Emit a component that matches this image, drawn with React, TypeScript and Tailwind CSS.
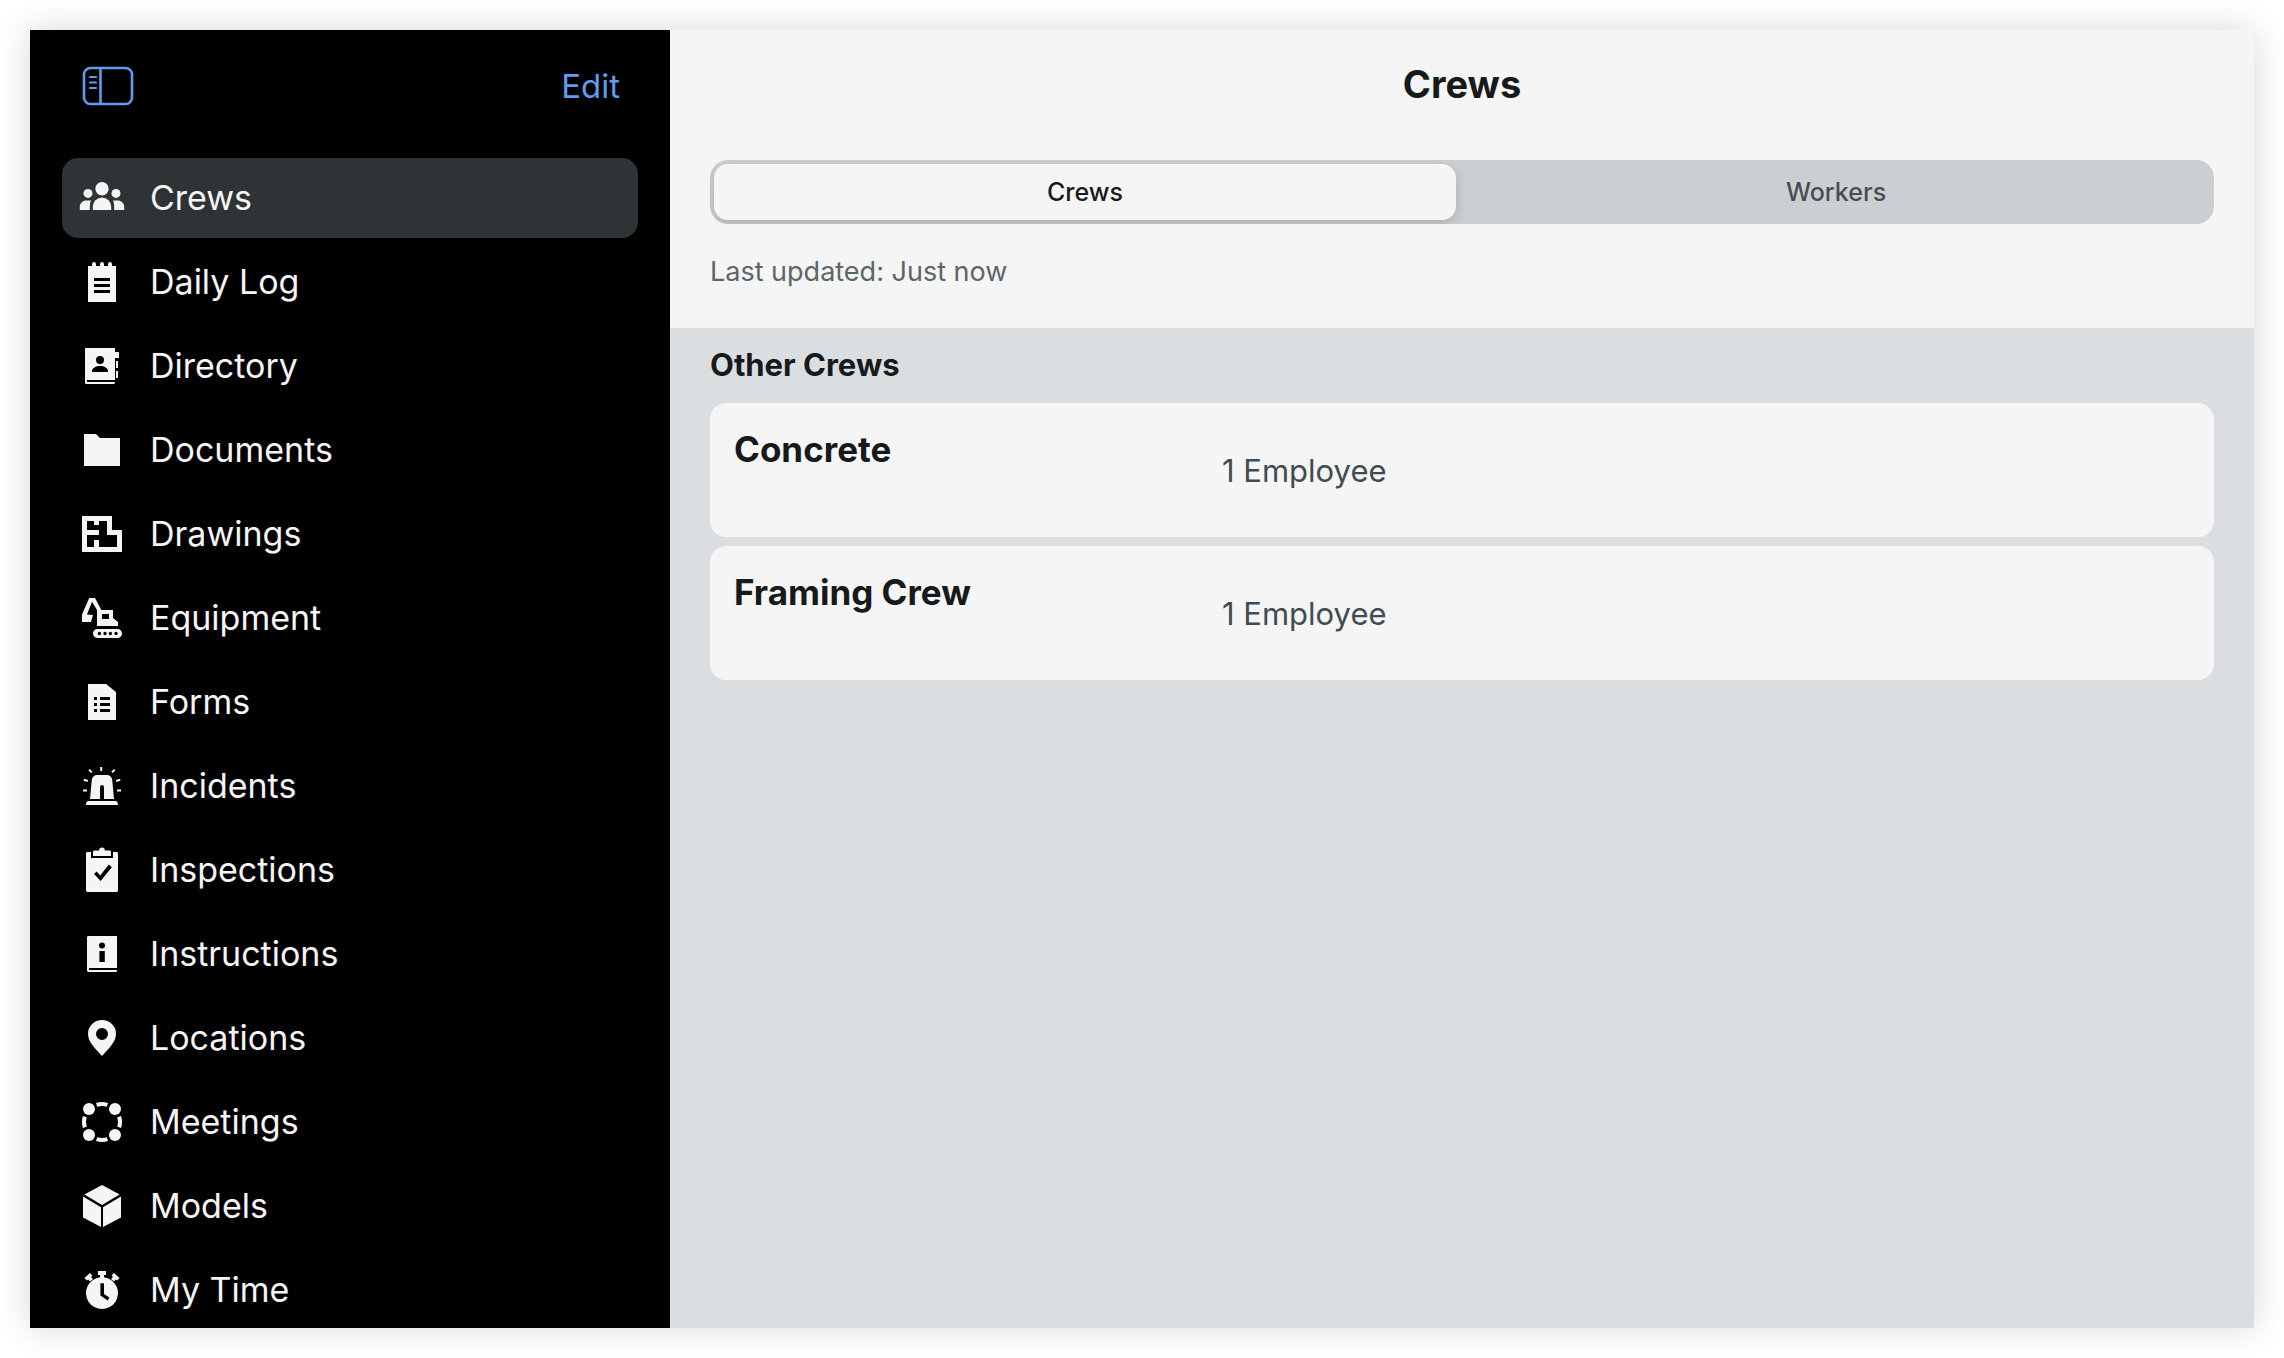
import { useState, type ReactNode } from "react";

const icons: Record<string, ReactNode> = {
  Crews: (
    <>
      <circle cx="12" cy="7.35" r="3.35" />
      <circle cx="5" cy="9.7" r="2.25" />
      <circle cx="19" cy="9.7" r="2.25" />
      <path d="M7.4 18v-1.6a4.6 4.6 0 0 1 9.2 0V18z" />
      <path d="M.9 18v-1.6c0-1.9 1.5-3.2 3.4-3.2h2.2c-.4.9-.6 1.9-.6 3V18z" />
      <path d="M23.1 18v-1.6c0-1.9-1.5-3.2-3.4-3.2h-2.2c.4.9.6 1.9.6 3V18z" />
    </>
  ),
  "Daily Log": (
    <path
      fillRule="evenodd"
      d="M5 4h2V3a1 1 0 0 1 2 0v1h2V3a1 1 0 0 1 2 0v1h2V3a1 1 0 0 1 2 0v1h2v18H5zM8 10v1.5h8V10zM8 13v1.5h8V13zM8 16v1.5h8V16z"
    />
  ),
  Directory: (
    <>
      <path
        fillRule="evenodd"
        d="M4 3h14.5v2h2v3h-2v11h-14v1h14v.3c0 .4-.3.7-.7.7H4a.5.5 0 0 1-.5-.5v-17A.5.5 0 0 1 4 3zM11 7a2 2 0 1 0 0 4 2 2 0 0 0 0-4zM7 15h8v-.5c0-1.5-2-2.5-4-2.5s-4 1-4 2.5z"
      />
      <path d="M19 9.5h1V13h-1zM19 14.500h1V18h-1z" />
    </>
  ),
  Documents: <path d="M3 4h6l2 2h10v14H3z" />,
  Drawings: (
    <path
      fillRule="evenodd"
      d="M2 3h15v7h5v11H2zM4.5 5.5V10h6v2.5h-6v6H8V15h2.5v3.5h9v-6h-5v-7h-4v2H8v-2z"
    />
  ),
  Equipment: (
    <>
      <path
        fillRule="evenodd"
        d="M5.6 2h2.9l3.2 6h5.8v4l2.5 2v2H9.5V8L7 3.9 4.5 10.3l3 .2-1 3.5H2v-3.7zM12 10v2.5h3.5V10z"
      />
      <path
        fillRule="evenodd"
        d="M9.75 17.5h10a2.25 2.25 0 0 1 0 4.5h-10a2.25 2.25 0 0 1 0-4.5zM10.7 18.9a.85.85 0 1 0 0 1.7.85.85 0 0 0 0-1.7zM13.5 18.9a.85.85 0 1 0 0 1.7.85.85 0 0 0 0-1.7zM16.2 18.9a.85.85 0 1 0 0 1.7.85.85 0 0 0 0-1.7zM19 18.9a.85.85 0 1 0 0 1.7.85.85 0 0 0 0-1.7z"
      />
    </>
  ),
  Forms: (
    <path
      fillRule="evenodd"
      d="M5 3h9l5 4v14H5zM8 9.5V11h1.5V9.5zM11 9.5V11h5V9.5zM8 12.5V14h1.5v-1.5zM11 12.5V14h5v-1.5zM8 15.5V17h1.5v-1.5zM11 15.5V17h5v-1.5z"
    />
  ),
  Incidents: (
    <>
      <path d="M6 18.5 6.9 8.9A2.6 2.6 0 0 1 9.5 6.5h5a2.6 2.6 0 0 1 2.6 2.4l.9 9.6h-5v-6a1 1 0 0 0-2 0v6z" />
      <path d="M5.2 19.5h13.6c.7 0 1.2.7 1.2 2H4c0-1.3.5-2 1.2-2z" />
      <path
        d="M11.6 2.5v2M5.5 3.8l1.4 1.4M18.4 3.8 17 5.2M2.9 8.9l2 .6M21.1 8.9l-2 .6M2.5 14.2h2M19.5 14.2h2"
        fill="none"
        stroke="currentColor"
        strokeWidth="1"
      />
    </>
  ),
  Inspections: (
    <>
      <path
        fillRule="evenodd"
        d="M4.7 3h1.8v3h11V3h1.8a.7.7 0 0 1 .7.7v18.6a.7.7 0 0 1-.7.7H4.7a.7.7 0 0 1-.7-.7V3.7A.7.7 0 0 1 4.7 3zM9.3 12.7l-1.3 1.3 3.3 3.5 5.6-6.9-1.5-1.3-4.3 5.4z"
      />
      <path d="M8.2 2.2h2.4a1.4 1.4 0 0 1 2.8 0h2.4a.7.7 0 0 1 .7.7V5h-9V2.9a.7.7 0 0 1 .7-.7z" />
    </>
  ),
  Instructions: (
    <path
      fillRule="evenodd"
      d="M5.2 3h14.3v16h-14v1h14v.2c0 .5-.3.8-.8.8H5.2a.7.7 0 0 1-.7-.7V3.7a.7.7 0 0 1 .7-.7zM12 6.3a1.5 1.5 0 1 0 0 3 1.5 1.5 0 0 0 0-3zM10.7 10.5V16h2.7v-5.5z"
    />
  ),
  Locations: (
    <path
      fillRule="evenodd"
      d="M12 3a7 7 0 0 0-7 7c0 4.2 4 7.5 7 11 3-3.5 7-6.8 7-11a7 7 0 0 0-7-7zM12 7a3 3 0 1 1 0 6 3 3 0 0 1 0-6z"
    />
  ),
  Meetings: (
    <>
      <circle cx="5.5" cy="5.5" r="3" />
      <circle cx="18.5" cy="5.5" r="3" />
      <circle cx="5.5" cy="18.5" r="3" />
      <circle cx="18.5" cy="18.5" r="3" />
      <path
        d="M9.3 3.4a9 9 0 0 1 5.4 0M9.3 20.6a9 9 0 0 0 5.4 0M3.4 9.3a9 9 0 0 0 0 5.4M20.6 9.3a9 9 0 0 1 0 5.4"
        fill="none"
        stroke="currentColor"
        strokeWidth="2"
      />
    </>
  ),
  Models: (
    <>
      <path d="M12 1.5 20.8 6.3 12 11.5 3.2 6.3z" />
      <path d="M2.5 7.3 11.5 12.6v9.9L2.5 17.8zM21.5 7.3 12.5 12.6v9.9l9-4.7z" />
    </>
  ),
  "My Time": (
    <>
      <path
        fillRule="evenodd"
        d="M10 2.5h4v2h-1v1.1a8 8 0 1 1-2 0V4.5h-1zM11.2 8.6v6.2l3.6 2.4.9-1.4-2.7-1.8V8.6z"
      />
      <path d="M3.2 6 6 3.5l1.2 1.3-.7.7 1 1L6 7.8l-.9-1-.6.5zM20.8 6 18 3.5l-1.2 1.3.7.7-1 1L18 7.8l.9-1 .6.5z" />
    </>
  ),
};

const tools = [
  "Crews",
  "Daily Log",
  "Directory",
  "Documents",
  "Drawings",
  "Equipment",
  "Forms",
  "Incidents",
  "Inspections",
  "Instructions",
  "Locations",
  "Meetings",
  "Models",
  "My Time",
];

const crews = [
  { name: "Concrete", employees: "1 Employee" },
  { name: "Framing Crew", employees: "1 Employee" },
];

function SidebarIcon() {
  return (
    <svg viewBox="0 0 52 40" className="h-10 w-[52px]" fill="none" stroke="currentColor" aria-hidden="true">
      <rect x="2" y="2" width="48" height="36" rx="6.5" strokeWidth="2.6" />
      <path d="M18.5 2v36" strokeWidth="2.6" />
      <path d="M8 11h6M8 16.5h6M8 22h6" strokeWidth="2.2" strokeLinecap="round" />
    </svg>
  );
}

function Sidebar() {
  const [current, setCurrent] = useState("Crews");
  return (
    <aside className="flex w-[640px] shrink-0 flex-col bg-black px-8">
      <header className="mb-4 flex h-28 shrink-0 items-center justify-between pr-[18px] pl-5 text-[#639bec]">
        <button type="button" aria-label="Toggle sidebar">
          <SidebarIcon />
        </button>
        <button type="button" className="text-[33px] leading-10">
          Edit
        </button>
      </header>
      <nav className="min-h-0 flex-1 overflow-y-auto [scrollbar-width:none]">
        <ul className="flex flex-col gap-1">
          {tools.map((tool) => (
            <li key={tool}>
              <button
                type="button"
                aria-current={tool === current ? "page" : undefined}
                onClick={() => setCurrent(tool)}
                className="flex h-20 w-full items-center gap-6 rounded-2xl px-4 text-left text-[34px] leading-10 text-[#f5f5f5] aria-[current=page]:bg-[#2e3336]"
              >
                <svg viewBox="0 0 24 24" className="size-12 shrink-0" fill="currentColor" aria-hidden="true">
                  {icons[tool]}
                </svg>
                {tool}
              </button>
            </li>
          ))}
        </ul>
      </nav>
    </aside>
  );
}

function Segments() {
  const [tab, setTab] = useState("Crews");
  return (
    <div role="tablist" className="grid h-16 grid-cols-2 overflow-hidden rounded-[18px] bg-[#cbcfd2]">
      {["Crews", "Workers"].map((name) => (
        <button
          key={name}
          type="button"
          role="tab"
          aria-selected={tab === name}
          onClick={() => setTab(name)}
          className="my-1 rounded-[14px] text-[25px] leading-8 font-medium text-[#464f53] first:mr-1.5 first:ml-1 last:mr-1 aria-selected:bg-[#f5f5f5] aria-selected:text-[#161a1b] aria-selected:shadow-[0_4px_12px_rgba(0,0,0,0.16)]"
        >
          {name}
        </button>
      ))}
    </div>
  );
}

export default function App() {
  return (
    <div className="flex h-screen bg-white p-[30px] font-['Inter',sans-serif]">
      <div className="flex min-w-0 flex-1 overflow-hidden shadow-[0_0_32px_rgba(0,0,0,0.16)]">
        <Sidebar />
        <main className="flex min-w-0 flex-1 flex-col bg-[#dadee1] text-[#161a1b]">
          <header className="bg-[#f5f5f5] px-10 pt-[30px] pb-9">
            <h1 className="mb-[52px] text-center text-[38px] leading-12 font-bold">Crews</h1>
            <Segments />
            <p className="mt-7 text-[27px] leading-10 text-[#5a666a]">Last updated: Just now</p>
          </header>
          <section className="px-10 pt-[17px]">
            <h2 className="text-[31px] leading-10 font-bold">Other Crews</h2>
            <ul className="mt-[18px] flex flex-col gap-[9px]">
              {crews.map((crew) => (
                <li
                  key={crew.name}
                  className="grid h-[134px] grid-cols-3 gap-2 rounded-2xl bg-[#f5f5f5] px-6 pt-[26px] pb-6"
                >
                  <h3 className="text-[35px] leading-10 font-bold">{crew.name}</h3>
                  <p className="self-center text-[31px] leading-10 text-[#414c50]">{crew.employees}</p>
                </li>
              ))}
            </ul>
          </section>
        </main>
      </div>
    </div>
  );
}
